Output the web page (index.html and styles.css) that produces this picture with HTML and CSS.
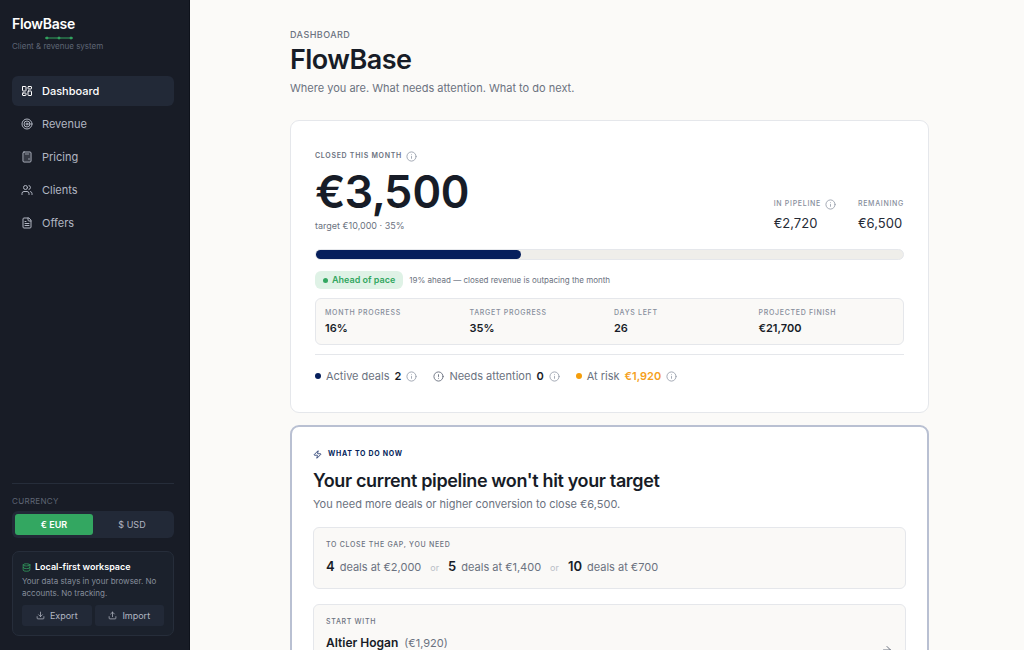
FILE: index.html
```html
<!DOCTYPE html>
<html lang="en">
<head>
<meta charset="utf-8">
<meta name="viewport" content="width=device-width, initial-scale=1">
<title>FlowBase</title>
<link rel="stylesheet" href="styles.css">
</head>
<body>
<!-- shared icons -->
<svg class="sprite" aria-hidden="true">
    <symbol id="icon-info" viewBox="0 0 24 24">
        <circle cx="12" cy="12" r="10"/><path d="M12 16v-4M12 8h.01"/>
    </symbol>
</svg>

<div class="app">
<aside class="sidebar">
    <div class="brand">
        <div class="brand-name">Flow<span class="brand-base">Base<svg class="brand-line" viewBox="0 0 30 4"><path d="M1 2h28"/><circle cx="3" cy="2" r="1"/><circle cx="15" cy="2" r="1"/><circle cx="27" cy="2" r="1"/></svg></span></div>
        <div class="brand-sub">Client &amp; revenue system</div>
    </div>
    <nav class="nav">
        <a class="nav-link active" href="#dashboard">
            <svg class="icon" viewBox="0 0 24 24"><rect x="3" y="3" width="7" height="9" rx="1"/><rect x="14" y="3" width="7" height="5" rx="1"/><rect x="14" y="12" width="7" height="9" rx="1"/><rect x="3" y="16" width="7" height="5" rx="1"/></svg>
            Dashboard
        </a>
        <a class="nav-link" href="#revenue">
            <svg class="icon" viewBox="0 0 24 24"><circle cx="12" cy="12" r="10"/><circle cx="12" cy="12" r="6"/><circle cx="12" cy="12" r="2"/></svg>
            Revenue
        </a>
        <a class="nav-link" href="#pricing">
            <svg class="icon" viewBox="0 0 24 24"><rect x="4" y="2" width="16" height="20" rx="2"/><path d="M8 6h8M16 14v4M16 10h.01M12 10h.01M8 10h.01M12 14h.01M8 14h.01M12 18h.01M8 18h.01"/></svg>
            Pricing
        </a>
        <a class="nav-link" href="#clients">
            <svg class="icon" viewBox="0 0 24 24"><path d="M16 21v-2a4 4 0 0 0-4-4H6a4 4 0 0 0-4 4v2"/><circle cx="9" cy="7" r="4"/><path d="M22 21v-2a4 4 0 0 0-3-3.87M16 3.13a4 4 0 0 1 0 7.75"/></svg>
            Clients
        </a>
        <a class="nav-link" href="#offers">
            <svg class="icon" viewBox="0 0 24 24"><path d="M15 2H6a2 2 0 0 0-2 2v16a2 2 0 0 0 2 2h12a2 2 0 0 0 2-2V7z"/><path d="M14 2v4a2 2 0 0 0 2 2h4M10 9H8M16 13H8M16 17H8"/></svg>
            Offers
        </a>
    </nav>
    <div class="sidebar-footer">
        <div class="currency-label" id="currency-label">Currency</div>
        <div class="currency" role="group" aria-labelledby="currency-label">
            <button class="currency-button selected" type="button" aria-pressed="true">€ EUR</button>
            <button class="currency-button" type="button" aria-pressed="false">$ USD</button>
        </div>
        <div class="workspace">
            <div class="workspace-title">
                <svg class="icon" viewBox="0 0 24 24"><ellipse cx="12" cy="5" rx="9" ry="3"/><path d="M3 5v14a9 3 0 0 0 18 0V5M3 12a9 3 0 0 0 18 0"/></svg>
                Local-first workspace
            </div>
            <p class="workspace-text">Your data stays in your browser. No accounts. No tracking.</p>
            <div class="workspace-actions">
                <button class="small-button" type="button"><svg class="icon" viewBox="0 0 24 24"><path d="M21 15v4a2 2 0 0 1-2 2H5a2 2 0 0 1-2-2v-4M7 10l5 5 5-5M12 15V3"/></svg>Export</button>
                <button class="small-button" type="button"><svg class="icon" viewBox="0 0 24 24"><path d="M21 15v4a2 2 0 0 1-2 2H5a2 2 0 0 1-2-2v-4M17 8l-5-5-5 5M12 3v12"/></svg>Import</button>
            </div>
        </div>
    </div>
</aside>

<main class="main">
<div class="content">
    <header class="page-header">
        <div class="eyebrow">Dashboard</div>
        <h1>FlowBase</h1>
        <p class="lead">Where you are. What needs attention. What to do next.</p>
    </header>

    <section class="card">
        <div class="label label-main">Closed this month <svg class="icon info"><use href="#icon-info"/></svg></div>
        <div class="revenue">
            <div>
                <div class="amount">€3,500</div>
                <div class="target">target €10,000 · 35%</div>
            </div>
            <div class="totals">
                <div>
                    <div class="label">In pipeline <svg class="icon info"><use href="#icon-info"/></svg></div>
                    <div class="total">€2,720</div>
                </div>
                <div>
                    <div class="label">Remaining</div>
                    <div class="total">€6,500</div>
                </div>
            </div>
        </div>
        <div class="progress"><div class="progress-fill" style="width: 35%;"></div></div>
        <div class="pace">
            <span class="badge"><span class="badge-dot"></span>Ahead of pace</span>
            <span>19% ahead — closed revenue is outpacing the month</span>
        </div>
        <div class="stats">
            <div><div class="label">Month progress</div><div class="stat">16%</div></div>
            <div><div class="label">Target progress</div><div class="stat">35%</div></div>
            <div><div class="label">Days left</div><div class="stat">26</div></div>
            <div><div class="label">Projected finish</div><div class="stat">€21,700</div></div>
        </div>
        <div class="signals">
            <div class="signal"><span class="dot"></span>Active deals <b>2</b><svg class="icon info"><use href="#icon-info"/></svg></div>
            <div class="signal"><svg class="icon alert" viewBox="0 0 24 24"><circle cx="12" cy="12" r="10"/><path d="M12 8v4M12 16h.01"/></svg>Needs attention <b>0</b><svg class="icon info"><use href="#icon-info"/></svg></div>
            <div class="signal risk"><span class="dot"></span>At risk <b>€1,920</b><svg class="icon info"><use href="#icon-info"/></svg></div>
        </div>
    </section>

    <section class="card card-action">
        <div class="action-label">
            <svg class="icon" viewBox="0 0 24 24"><path d="M4 14a1 1 0 0 1-.78-1.63l9.9-10.2a.5.5 0 0 1 .86.46l-1.92 6.02A1 1 0 0 0 13 10h7a1 1 0 0 1 .78 1.63l-9.9 10.2a.5.5 0 0 1-.86-.46l1.92-6.02A1 1 0 0 0 11 14z"/></svg>
            What to do now
        </div>
        <h2>Your current pipeline won't hit your target</h2>
        <p class="action-text">You need more deals or higher conversion to close €6,500.</p>
        <div class="panel">
            <div class="label">To close the gap, you need</div>
            <div class="options">
                <span class="option"><b>4</b>deals at €2,000</span>
                <span class="or">or</span>
                <span class="option"><b>5</b>deals at €1,400</span>
                <span class="or">or</span>
                <span class="option"><b>10</b>deals at €700</span>
            </div>
        </div>
        <a class="panel start" href="#clients">
            <span>
                <span class="label">Start with</span>
                <span class="client"><b>Altier Hogan</b>(€1,920)</span>
            </span>
            <svg class="icon arrow" viewBox="0 0 24 24"><path d="M5 12h14M12 5l7 7-7 7"/></svg>
        </a>
    </section>
</div>
</main>
</div>
</body>
</html>
```

FILE: styles.css
```css
* {
    box-sizing: border-box;
}

body {
    margin: 0;
    font-family: Inter, "Liberation Sans", sans-serif;
    font-size: 11px;
    line-height: 16px;
    color: #171c27;
    background-color: #fbfaf8;
}

h1, h2, p {
    margin: 0;
}

button {
    font-family: inherit;
    border: 0;
    cursor: pointer;
}

a {
    color: inherit;
    text-decoration: none;
}

b {
    font-weight: 600;
    color: #171c27;
}

.sprite {
    display: none;
}

.icon {
    flex: none;
    width: 12px;
    height: 12px;
    fill: none;
    stroke: currentColor;
    stroke-width: 2;
    stroke-linecap: round;
    stroke-linejoin: round;
}

.app {
    display: flex;
    height: 100vh;
}

/* Sidebar */

.sidebar {
    display: flex;
    flex-direction: column;
    flex: none;
    width: 190px;
    padding: 16px 15px 14px 12px;
    color: #b1b6c2;
    background-color: #181c26;
    border-right: 1px solid #0e121b;
}

.brand-name {
    font-size: 14px;
    font-weight: 600;
    letter-spacing: -0.02em;
    color: #fff;
}

.brand-base {
    position: relative;
}

.brand-line {
    position: absolute;
    left: 1px;
    bottom: -8px;
    width: 30px;
    height: 4px;
    stroke: #33a761;
    fill: #33a761;
}

.brand-sub {
    margin-top: 8px;
    font-size: 8px;
    line-height: 12px;
    color: #5f6675;
}

.nav {
    display: flex;
    flex-direction: column;
    gap: 3px;
    margin-top: 24px;
}

.nav-link {
    display: flex;
    align-items: center;
    gap: 9px;
    height: 30px;
    padding: 0 9px;
    border-radius: 6px;
}

.nav-link.active {
    font-weight: 500;
    color: #fff;
    background-color: #222937;
}

.sidebar-footer {
    margin-top: auto;
    padding-top: 11px;
    border-top: 1px solid #262d3a;
}

.currency-label {
    font-size: 8px;
    line-height: 12px;
    letter-spacing: 0.04em;
    text-transform: uppercase;
    color: #5f6675;
}

.currency {
    display: flex;
    margin-top: 4px;
    padding: 3px;
    background-color: #222937;
    border-radius: 6px;
}

.currency-button {
    flex: 1;
    height: 21px;
    padding: 0;
    font-size: 9px;
    color: #b1b6c2;
    background-color: transparent;
    border-radius: 3px;
}

.currency-button.selected {
    font-weight: 600;
    color: #fff;
    background-color: #33a761;
}

.workspace {
    margin-top: 13px;
    padding: 9px;
    background-color: #1b212c;
    border: 1px solid #262d3a;
    border-radius: 7px;
}

.workspace-title {
    display: flex;
    align-items: center;
    gap: 4px;
    font-size: 9px;
    line-height: 12px;
    font-weight: 600;
    color: #fff;
}

.workspace-title .icon {
    width: 9px;
    height: 9px;
    color: #33a761;
}

.workspace-text {
    margin-top: 2px;
    font-size: 8px;
    line-height: 12px;
    color: #868d9b;
}

.workspace-actions {
    display: flex;
    gap: 3px;
    margin-top: 6px;
}

.small-button {
    display: flex;
    flex: 1;
    align-items: center;
    justify-content: center;
    gap: 5px;
    height: 21px;
    padding: 0;
    font-size: 9px;
    color: #b1b6c2;
    background-color: #222937;
    border-radius: 3px;
}

.small-button .icon {
    width: 9px;
    height: 9px;
}

/* Page */

.main {
    flex: 1;
    min-width: 0;
    padding: 28px 95px 28px 100px;
    overflow-y: auto;
    scrollbar-width: none;
}

.content {
    max-width: 720px;
    margin: 0 auto;
}

.eyebrow {
    font-size: 9px;
    line-height: 14px;
    font-weight: 500;
    letter-spacing: 0.05em;
    text-transform: uppercase;
    color: #6b7280;
}

h1 {
    font-size: 27px;
    line-height: 36px;
    font-weight: 600;
    letter-spacing: -0.02em;
}

.lead {
    margin-top: 2px;
    color: #6b7280;
}

.card {
    margin-top: 24px;
    padding: 29px 24px 28px;
    background-color: #fff;
    border: 1px solid #e5e7eb;
    border-radius: 9px;
}

.label {
    display: flex;
    align-items: center;
    gap: 4px;
    font-size: 7px;
    line-height: 12px;
    font-weight: 500;
    letter-spacing: 0.1em;
    text-transform: uppercase;
    color: #868d9b;
}

.label-main {
    font-weight: 600;
    color: #6b7280;
}

.info,
.alert {
    width: 11px;
    height: 11px;
}

.info {
    color: #9ca3af;
}

.revenue {
    display: flex;
    align-items: flex-end;
    justify-content: space-between;
}

.amount {
    margin-top: 5px;
    font-size: 45px;
    line-height: 50px;
    font-weight: 600;
    letter-spacing: -0.02em;
    font-variant-numeric: tabular-nums;
}

.target {
    margin-top: 2px;
    font-size: 9px;
    line-height: 14px;
    color: #6b7280;
}

.totals {
    display: flex;
    gap: 22px;
    padding-bottom: 2px;
}

.total {
    margin-top: 5px;
    font-size: 13px;
    color: #252a36;
}

.progress {
    height: 11px;
    margin-top: 16px;
    background-color: #efeeea;
    border: 1px solid #e5e7eb;
    border-radius: 6px;
}

.progress-fill {
    height: 100%;
    background-color: #061f5c;
    border-radius: 6px;
}

.pace {
    display: flex;
    align-items: center;
    gap: 6px;
    margin-top: 11px;
    font-size: 8px;
    color: #6b7280;
}

.badge {
    display: flex;
    align-items: center;
    gap: 4px;
    height: 18px;
    padding: 0 8px;
    font-size: 9px;
    font-weight: 600;
    color: #33a761;
    background-color: #dff2e6;
    border-radius: 6px;
}

.badge-dot {
    width: 5px;
    height: 5px;
    background-color: #33a761;
    border-radius: 50%;
}

.stats {
    display: grid;
    grid-template-columns: repeat(4, 1fr);
    gap: 9px;
    margin-top: 9px;
    padding: 8px 9px;
    background-color: #faf9f7;
    border: 1px solid #e5e7eb;
    border-radius: 6px;
}

.stat {
    margin-top: 1px;
    font-weight: 600;
}

.signals {
    display: flex;
    gap: 16px;
    margin-top: 9px;
    padding-top: 13px;
    border-top: 1px solid #e5e7eb;
}

.signal {
    display: flex;
    align-items: center;
    gap: 5px;
    color: #6b7280;
}

.dot {
    width: 6px;
    height: 6px;
    background-color: #061f5c;
    border-radius: 50%;
}

.risk .dot {
    background-color: #f59e0b;
}

.risk b {
    color: #f5a020;
}

.card-action {
    margin-top: 12px;
    padding: 21px 21px 20px;
    border: 2px solid #b9c0d2;
}

.action-label {
    display: flex;
    align-items: center;
    gap: 6px;
    font-size: 7px;
    line-height: 12px;
    font-weight: 700;
    letter-spacing: 0.1em;
    text-transform: uppercase;
    color: #061f5c;
}

.action-label .icon {
    width: 9px;
    height: 9px;
}

h2 {
    margin-top: 8px;
    font-size: 18px;
    line-height: 26px;
    font-weight: 600;
    letter-spacing: -0.02em;
}

.action-text {
    margin-top: 2px;
    color: #6b7280;
}

.panel {
    display: block;
    margin-top: 15px;
    padding: 11px 12px 12px;
    background-color: #faf9f7;
    border: 1px solid #e5e7eb;
    border-radius: 6px;
}

.panel .label {
    color: #6b7280;
}

.options {
    display: flex;
    align-items: baseline;
    gap: 9px;
    margin-top: 7px;
    color: #6b7280;
}

.option {
    display: flex;
    align-items: baseline;
    gap: 5px;
}

.option b {
    font-size: 13px;
}

.or {
    font-size: 9px;
    color: #b9bec7;
}

.start {
    display: flex;
    align-items: center;
    justify-content: space-between;
    min-height: 92px;
}

.start > span {
    align-self: flex-start;
}

.client {
    display: flex;
    align-items: baseline;
    gap: 6px;
    margin-top: 7px;
    color: #6b7280;
}

.client b {
    font-size: 12px;
}

.arrow {
    color: #6b7280;
}
```
